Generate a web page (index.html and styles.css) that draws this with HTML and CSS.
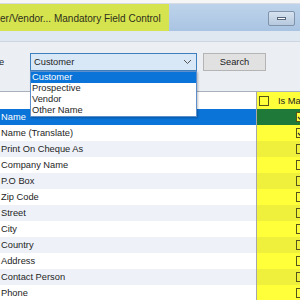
FILE: index.html
```html
<!DOCTYPE html>
<html lang="en">
<head>
  <meta charset="UTF-8">
  <title>Mandatory Field Control</title>
  <link rel="stylesheet" href="styles.css">
</head>
<body>
  <div class="window">
    <div class="topline"></div>

    <!-- barra de título -->
    <div class="titlebar">
      <span class="title">er/Vendor... Mandatory Field Control</span>
      <button class="minbtn"><span class="dash"></span></button>
    </div>
    <div class="band"></div>

    <!-- filtro -->
    <div class="filter">
      <span class="label">e</span>
      <div class="combo">
        <div class="combo_box">
          <span>Customer</span>
          <svg width="9" height="6" viewBox="0 0 9 6"><path d="M1 1 L4.5 4.5 L8 1" fill="none" stroke="#555" stroke-width="1"/></svg>
        </div>
        <ul class="combo_list">
          <li class="sel">Customer</li>
          <li>Prospective</li>
          <li>Vendor</li>
          <li>Other Name</li>
        </ul>
      </div>
      <button class="search">Search</button>
    </div>

    <!-- grade -->
    <div class="grid">
      <div class="row head">
        <div class="c1"></div>
        <div class="c2"><span class="cb"></span><span class="htxt">Is Mandatory</span></div>
      </div>
      <div class="row sel">
        <div class="c1">Name</div>
        <div class="c2"><span class="cb on"><svg width="8" height="8" viewBox="0 0 8 8"><path d="M1 4 L3 6.2 L7 1.5" fill="none" stroke="#333" stroke-width="1.2"/></svg></span></div>
      </div>
      <div class="row">
        <div class="c1">Name (Translate)</div>
        <div class="c2"><span class="cb on"><svg width="8" height="8" viewBox="0 0 8 8"><path d="M1 4 L3 6.2 L7 1.5" fill="none" stroke="#333" stroke-width="1.2"/></svg></span></div>
      </div>
      <div class="row alt">
        <div class="c1">Print On Cheque As</div>
        <div class="c2"><span class="cb"></span></div>
      </div>
      <div class="row">
        <div class="c1">Company Name</div>
        <div class="c2"><span class="cb"></span></div>
      </div>
      <div class="row alt">
        <div class="c1">P.O Box</div>
        <div class="c2"><span class="cb"></span></div>
      </div>
      <div class="row">
        <div class="c1">Zip Code</div>
        <div class="c2"><span class="cb"></span></div>
      </div>
      <div class="row alt">
        <div class="c1">Street</div>
        <div class="c2"><span class="cb"></span></div>
      </div>
      <div class="row">
        <div class="c1">City</div>
        <div class="c2"><span class="cb"></span></div>
      </div>
      <div class="row alt">
        <div class="c1">Country</div>
        <div class="c2"><span class="cb"></span></div>
      </div>
      <div class="row">
        <div class="c1">Address</div>
        <div class="c2"><span class="cb"></span></div>
      </div>
      <div class="row alt">
        <div class="c1">Contact Person</div>
        <div class="c2"><span class="cb"></span></div>
      </div>
      <div class="row">
        <div class="c1">Phone</div>
        <div class="c2"><span class="cb"></span></div>
      </div>
    </div>
  </div>
</body>
</html>
```

FILE: styles.css
```css
:root {
  --azul: #0a74d8;
  --amarelo: #ffff3a;
  --amarelo-alt: #eef03c;
  --verde: #1f7a3a;
  --linha: #eef2f8;
}

* {
  box-sizing: border-box;
}

body {
  margin: 0;
  width: 300px;
  height: 300px;
  overflow: hidden;
  font-family: "Liberation Sans", Arial, sans-serif;
  font-size: 9.3px;
  color: #1e1e1e;
  background: #fff;
}

.window {
  width: 300px;
}

.topline {
  height: 4px;
  background: #f6f6f6;
  border-bottom: 1px solid #d8dde3;
}

.titlebar {
  height: 27px;
  display: flex;
  align-items: stretch;
  justify-content: space-between;
  background: linear-gradient(#bed3eb, #a9c4e2);
}

.title {
  display: flex;
  align-items: center;
  background: #d5e44e;
  color: #2e2e1c;
  font-size: 10px;
  padding: 2px 8px 0 0;
  white-space: nowrap;
}

.minbtn {
  align-self: center;
  width: 27px;
  height: 15px;
  margin-right: 5px;
  margin-top: 2px;
  border: 1px solid #7f93ab;
  border-radius: 2px;
  background: linear-gradient(#d6e2ef, #b7c9de);
  display: flex;
  align-items: center;
  justify-content: center;
  padding: 0;
}

.dash {
  width: 9px;
  height: 3px;
  background: #fff;
  border: 1px solid #56677d;
}

.band {
  height: 11px;
  background: #dfe8f1;
  border-bottom: 1px solid #cdd6e0;
}

.filter {
  height: 50px;
  display: flex;
  align-items: flex-start;
  padding-top: 11px;
  background: #ebeff4;
  border-bottom: 1px solid #a9b2bc;
}

.label {
  width: 31px;
  line-height: 18px;
  margin-left: -1px;
}

.combo {
  position: relative;
  width: 167px;
}

.combo_box {
  height: 18px;
  border: 1px solid #3d7fbf;
  background: #d9e8f7;
  display: flex;
  align-items: center;
  justify-content: space-between;
  padding: 0 4px 0 3px;
}

.combo_list {
  position: absolute;
  top: 18px;
  left: 0;
  width: 167px;
  margin: 0;
  padding: 0;
  list-style: none;
  background: #fff;
  border: 1px solid #5c8fcb;
  box-shadow: 1px 1px 2px rgba(0, 0, 0, 0.25);
  z-index: 5;
}

.combo_list li {
  height: 11px;
  line-height: 11px;
  padding-left: 1px;
}

.combo_list li.sel {
  background: var(--azul);
  color: #fff;
}

.search {
  width: 63px;
  height: 18px;
  margin-left: 6px;
  border: 1px solid #b4b4b4;
  background: #e1e1e1;
  font-family: inherit;
  font-size: 9.3px;
  color: #222;
  padding: 0;
}

.grid {
  background: #fff;
}

.row {
  display: flex;
  height: 16px;
}

.row.head {
  height: 17px;
}

.c1 {
  width: 257px;
  border-right: 1px solid #a8a8a8;
  padding-left: 1px;
  line-height: 16px;
  white-space: nowrap;
}

.c2 {
  flex: 1;
  background: var(--amarelo);
  display: flex;
  align-items: center;
  padding-left: 39px;
  overflow: hidden;
}

.row.alt .c1 {
  background: var(--linha);
}

.row.alt .c2 {
  background: var(--amarelo-alt);
}

.row.sel .c1 {
  background: var(--azul);
  color: #fff;
}

.row.sel .c2 {
  background: var(--verde);
}

.head .c2 {
  padding-left: 2px;
  background: var(--amarelo);
}

.htxt {
  margin-left: 9px;
  white-space: nowrap;
}

.cb {
  width: 10px;
  height: 10px;
  flex: none;
  border: 1px solid #55541a;
  display: flex;
  align-items: center;
  justify-content: center;
}

.cb.on {
  background: var(--amarelo);
}
```
